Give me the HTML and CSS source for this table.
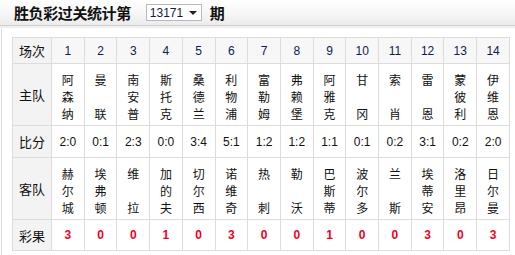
FILE: index.html
```html
<!DOCTYPE html>
<html lang="zh">
<head>
<meta charset="utf-8">
<title>胜负彩过关统计</title>
<link rel="stylesheet" href="styles.css">
</head>
<body>
<div class="panel">
  <div class="head">
    <span class="title">胜负彩过关统计第</span>
    <span class="issue">13171<i class="caret"></i></span>
    <span class="title">期</span>
  </div>
  <div class="body">
    <table class="stats">
      <colgroup><col class="c-label"><col span="14"></colgroup>
      <tr class="r-num">
        <th>场次</th><td>1</td><td>2</td><td>3</td><td>4</td><td>5</td><td>6</td><td>7</td><td>8</td><td>9</td><td>10</td><td>11</td><td>12</td><td>13</td><td>14</td>
      </tr>
      <tr class="r-team">
        <th>主队</th>
        <td>阿<br>森<br>纳</td><td>曼<br><br>联</td><td>南<br>安<br>普</td><td>斯<br>托<br>克</td><td>桑<br>德<br>兰</td><td>利<br>物<br>浦</td><td>富<br>勒<br>姆</td><td>弗<br>赖<br>堡</td><td>阿<br>雅<br>克</td><td>甘<br><br>冈</td><td>索<br><br>肖</td><td>雷<br><br>恩</td><td>蒙<br>彼<br>利</td><td>伊<br>维<br>恩</td>
      </tr>
      <tr class="r-score">
        <th>比分</th><td>2:0</td><td>0:1</td><td>2:3</td><td>0:0</td><td>3:4</td><td>5:1</td><td>1:2</td><td>1:2</td><td>1:1</td><td>0:1</td><td>0:2</td><td>3:1</td><td>0:2</td><td>2:0</td>
      </tr>
      <tr class="r-team">
        <th>客队</th>
        <td>赫<br>尔<br>城</td><td>埃<br>弗<br>顿</td><td>维<br><br>拉</td><td>加<br>的<br>夫</td><td>切<br>尔<br>西</td><td>诺<br>维<br>奇</td><td>热<br><br>刺</td><td>勒<br><br>沃</td><td>巴<br>斯<br>蒂</td><td>波<br>尔<br>多</td><td>兰<br><br>斯</td><td>埃<br>蒂<br>安</td><td>洛<br>里<br>昂</td><td>日<br>尔<br>曼</td>
      </tr>
      <tr class="r-result">
        <th>彩果</th><td>3</td><td>0</td><td>0</td><td>1</td><td>0</td><td>3</td><td>0</td><td>0</td><td>1</td><td>0</td><td>0</td><td>3</td><td>0</td><td>3</td>
      </tr>
    </table>
  </div>
</div>
</body>
</html>
```
FILE: styles.css
```css
html, body {
  margin: 0;
  padding: 0;
  background: #fff;
}
body {
  font-family: "Noto Sans CJK SC", "Liberation Sans", sans-serif;
  color: #111;
}
.panel {
  width: 515px;
  height: 255px;
  overflow: hidden;
}
.head {
  height: 26px;
  display: flex;
  align-items: center;
  padding-left: 14px;
  background: linear-gradient(#ffffff, #f6f6f6 55%, #ececec);
  border-bottom: 1px solid #cfcfcf;
  box-shadow: 0 2px 0 #f0f0f0;
  box-sizing: border-box;
}
.title {
  font-size: 15px;
  font-weight: bold;
  color: #111;
  letter-spacing: -0.4px;
  line-height: 18px;
}
.issue {
  display: inline-flex;
  align-items: center;
  justify-content: space-between;
  box-sizing: border-box;
  width: 56px;
  height: 17px;
  margin: 0 8px 0 15px;
  padding: 0 4px 0 3px;
  border: 1px solid #b9b9b9;
  background: #fff;
  font-family: "Liberation Sans", Arial, sans-serif;
  font-size: 12px;
  color: #111a4a;
}
.caret {
  width: 0;
  height: 0;
  border-left: 4px solid transparent;
  border-right: 4px solid transparent;
  border-top: 4px solid #222;
}
.body {
  margin-top: 2px;
  margin-left: 1px;
  border-left: 1px solid #dcdcdc;
  padding: 9px 0 0 10px;
  height: 240px;
  box-sizing: border-box;
}
.stats {
  border-collapse: collapse;
  table-layout: fixed;
  width: 498px;
  border: 1px solid #dcdcdc;
}
.c-label {
  width: 39px;
}
.stats th,
.stats td {
  border: 1px solid #dcdcdc;
  padding: 0;
  text-align: center;
  vertical-align: middle;
}
.stats th {
  background: #f3f3f3;
  font-weight: normal;
  font-size: 13px;
  color: #111;
}
.stats td {
  font-family: "Liberation Sans", Arial, sans-serif;
  font-size: 12px;
  color: #111;
}
.r-num td {
  background: #f7f7f7;
  color: #0f1a50;
}
.r-num { height: 26px; }
.r-score { height: 32px; }
.r-result { height: 31px; }
.r-team { height: 62px; }
.r-team td {
  font-family: "Noto Sans CJK SC", sans-serif;
  font-size: 12px;
  line-height: 17px;
  padding-top: 3px;
}
.r-result td {
  color: #f2001a;
  font-weight: bold;
  font-size: 12px;
}
```
